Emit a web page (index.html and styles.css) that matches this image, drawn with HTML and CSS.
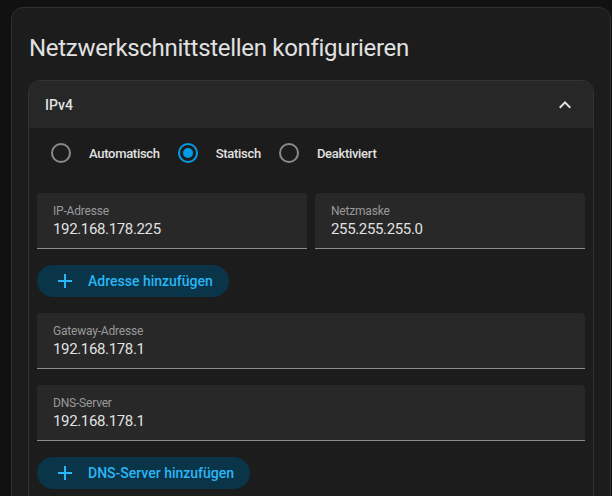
FILE: index.html
```html
<!DOCTYPE html>
<html lang="de">
<head>
    <meta charset="UTF-8">
    <meta name="viewport" content="width=device-width, initial-scale=1.0">
    <title>Netzwerkschnittstellen konfigurieren</title>
    <link rel="stylesheet" href="styles.css">
</head>
<body>

<div class="card">
    <h1 class="card-title">Netzwerkschnittstellen konfigurieren</h1>

    <div class="panel">
        <div class="panel-header">
            <span>IPv4</span>
            <svg class="chevron" viewBox="0 0 24 24" width="24" height="24">
                <path d="M7.41,15.41L12,10.83L16.59,15.41L18,14L12,8L6,14L7.41,15.41Z"/>
            </svg>
        </div>

        <div class="panel-body">
            <div class="radio-row">
                <label class="radio">
                    <span class="radio-box"><span class="radio-circle"></span></span>
                    <span class="radio-label">Automatisch</span>
                </label>
                <label class="radio">
                    <span class="radio-box"><span class="radio-circle checked"></span></span>
                    <span class="radio-label">Statisch</span>
                </label>
                <label class="radio">
                    <span class="radio-box"><span class="radio-circle"></span></span>
                    <span class="radio-label">Deaktiviert</span>
                </label>
            </div>

            <div class="field-row">
                <div class="field">
                    <span class="field-label">IP-Adresse</span>
                    <span class="field-value">192.168.178.225</span>
                </div>
                <div class="field">
                    <span class="field-label">Netzmaske</span>
                    <span class="field-value">255.255.255.0</span>
                </div>
            </div>

            <button class="add-button">
                <svg viewBox="0 0 24 24" width="24" height="24"><path d="M19,13H13V19H11V13H5V11H11V5H13V11H19V13Z"/></svg>
                Adresse hinzufügen
            </button>

            <div class="field">
                <span class="field-label">Gateway-Adresse</span>
                <span class="field-value">192.168.178.1</span>
            </div>

            <div class="field">
                <span class="field-label">DNS-Server</span>
                <span class="field-value">192.168.178.1</span>
            </div>

            <button class="add-button">
                <svg viewBox="0 0 24 24" width="24" height="24"><path d="M19,13H13V19H11V13H5V11H11V5H13V11H19V13Z"/></svg>
                DNS-Server hinzufügen
            </button>
        </div>
    </div>
</div>

</body>
</html>
```

FILE: styles.css
```css
body {
    margin: 0;
    height: 496px;
    background-color: #111111;
    font-family: Roboto, "Noto Sans", sans-serif;
    color: #e1e1e1;
    overflow: hidden;
}

.card {
    margin: 7px 0 0 11px;
    width: 600px;
    box-sizing: border-box;
    background-color: #1c1c1c;
    border: 1px solid #2f2f2f;
    border-radius: 12px;
    padding: 24px 16px 16px 16px;
}

.card-title {
    margin: 0 0 16px 1px;
    font-size: 24px;
    font-weight: 400;
    line-height: 32px;
    letter-spacing: -0.3px;
    color: #e1e1e1;
}

.panel {
    border: 1px solid #333333;
    border-radius: 12px;
    overflow: hidden;
}

.panel-header {
    display: flex;
    justify-content: space-between;
    align-items: center;
    height: 47px;
    padding: 0 16px;
    background-color: #272727;
    font-size: 14px;
    font-weight: 500;
}

.chevron {
    fill: #e1e1e1;
}

.panel-body {
    padding: 1px 8px 8px 8px;
    display: flex;
    flex-direction: column;
    align-items: flex-start;
}

.radio-row {
    display: flex;
    align-items: center;
    height: 48px;
    margin-bottom: 16px;
}

.radio {
    display: flex;
    align-items: center;
}

.radio-box {
    width: 48px;
    height: 48px;
    display: flex;
    align-items: center;
    justify-content: center;
}

.radio-circle {
    width: 20px;
    height: 20px;
    box-sizing: border-box;
    border: 2px solid #8a8a8a;
    border-radius: 50%;
    display: flex;
    align-items: center;
    justify-content: center;
}

.radio-circle.checked {
    border-color: #039be5;
}

.radio-circle.checked::after {
    content: "";
    width: 10px;
    height: 10px;
    border-radius: 50%;
    background-color: #039be5;
}

.radio-label {
    margin-left: 4px;
    padding-right: 4px;
    font-size: 13px;
    font-weight: 500;
    letter-spacing: -0.3px;
    color: #e1e1e1;
}

.field-row {
    display: flex;
    gap: 8px;
    width: 100%;
    margin-bottom: 16px;
}

.field-row .field {
    flex: 1;
    margin-bottom: 0;
}

.field {
    flex: none;
    width: 100%;
    height: 56px;
    margin-bottom: 16px;
    box-sizing: border-box;
    padding: 10px 16px 0 16px;
    background-color: #282828;
    border-bottom: 1px solid #8c8c8c;
    border-radius: 4px 4px 0 0;
    display: flex;
    flex-direction: column;
}

.field-label {
    font-size: 12px;
    line-height: 16px;
    letter-spacing: -0.2px;
    color: #9a9a9a;
}

.field-value {
    font-size: 15px;
    line-height: 20px;
    letter-spacing: -0.35px;
    color: #e1e1e1;
}

.add-button {
    flex: none;
    display: flex;
    align-items: center;
    height: 32px;
    margin: 0 0 16px 0;
    padding: 0 16px;
    border: none;
    border-radius: 16px;
    background-color: #0a3447;
    color: #29b6f6;
    font-family: Roboto, "Noto Sans", sans-serif;
    font-size: 14px;
    font-weight: 500;
}

.add-button svg {
    fill: #29b6f6;
    margin-right: 11px;
}
```
